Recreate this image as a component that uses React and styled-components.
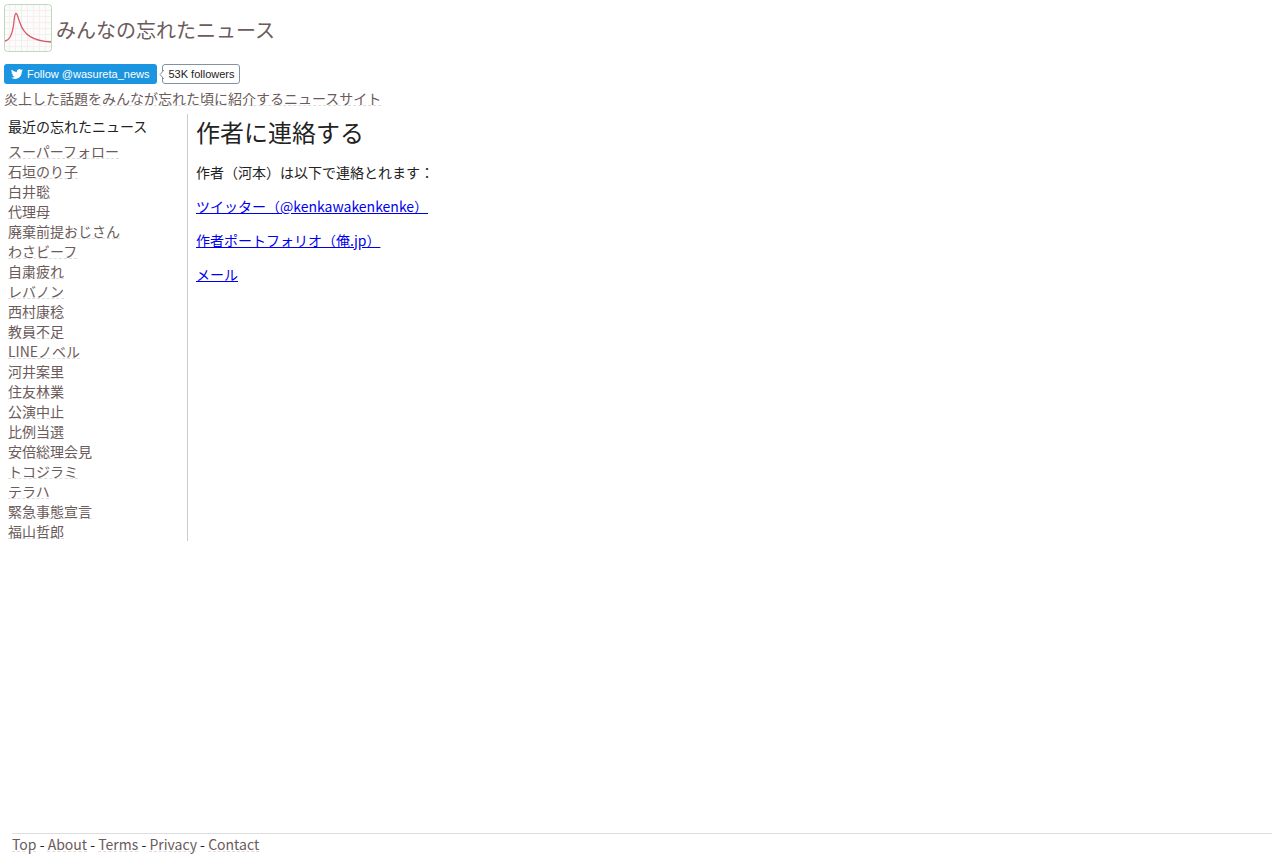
import React from "react";
import styled, { createGlobalStyle } from "styled-components";

const GlobalStyle = createGlobalStyle`
  body {
    margin: 0;
    background: #fff;
    color: #222;
    font-family: "Noto Sans CJK JP", sans-serif;
    font-size: 14px;
    line-height: 20px;
  }
`;

const Page = styled.div`
  display: flex;
  flex-direction: column;
  min-height: 100vh;
`;

const Header = styled.header`
  display: flex;
  flex-direction: column;
  align-items: flex-start;
  padding: 4px 4px 0;
`;

const SubtleLink = styled.a`
  color: #6b5b5b;
  text-decoration: underline dashed #ddd 1px;
`;

const Brand = styled.a`
  display: flex;
  align-items: center;
  gap: 4px;
  color: #6b5b5b;
  font-size: 20px;
  line-height: 28px;
  text-decoration: none;
`;

const SiteName = styled.span`
  padding-top: 4px;
`;

const FollowBar = styled.div`
  display: flex;
  gap: 5px;
  margin: 12px 0 4px;
  font-family: "Liberation Sans", Arial, sans-serif;
  font-size: 11px;
  line-height: 18px;
`;

const FollowLink = styled.a`
  display: flex;
  align-items: center;
  gap: 4px;
  box-sizing: border-box;
  height: 20px;
  padding: 0 8px 0 7px;
  border-radius: 3px;
  background: #1b95e0;
  color: #fff;
  text-decoration: none;
`;

const Followers = styled.a`
  position: relative;
  box-sizing: border-box;
  height: 20px;
  padding: 0 4px 0 5px;
  border: 1px solid #8292a2;
  border-radius: 3px;
  color: #222;
  text-decoration: none;
`;

const Pointer = styled.svg`
  position: absolute;
  left: -4px;
  top: 5px;
`;

const Columns = styled.div`
  display: flex;
  align-items: stretch;
  margin-top: 6px;
`;

const Sidebar = styled.nav`
  box-sizing: border-box;
  width: 188px;
  flex: none;
  padding: 2px 8px 0;
  border-right: 1px solid #ccc;
`;

const SidebarTitle = styled.h2`
  margin: 0 0 5px;
  font-size: 14px;
  font-weight: 400;
  line-height: 20px;
`;

const NewsList = styled.ul`
  margin: 0;
  padding: 0;
  list-style: none;
`;

const Main = styled.main`
  flex: 1;
  padding: 0 8px;
`;

const Title = styled.h1`
  margin: 0 0 12px;
  font-size: 24px;
  font-weight: 400;
  line-height: 36px;
`;

const Paragraph = styled.p`
  margin: 0 0 14px;
`;

const ContactLink = styled.a`
  color: #0000ee;
`;

const Footer = styled.footer`
  margin: auto 12px 0;
  padding-bottom: 4px;
  border-top: 1px solid #ddd;
`;

const news = [
  "スーパーフォロー", "石垣のり子", "白井聡", "代理母", "廃棄前提おじさん",
  "わさビーフ", "自粛疲れ", "レバノン", "西村康稔", "教員不足",
  "LINEノベル", "河井案里", "住友林業", "公演中止", "比例当選",
  "安倍総理会見", "トコジラミ", "テラハ", "緊急事態宣言", "福山哲郎",
];

const contacts = ["ツイッター（@kenkawakenkenke）", "作者ポートフォリオ（俺.jp）", "メール"];

const pages = ["Top", "About", "Terms", "Privacy", "Contact"];

function Logo() {
  return (
    <svg width="48" height="48" viewBox="0 0 48 48" aria-hidden="true">
      <rect x="0.5" y="0.5" width="47" height="47" rx="3" fill="#fcfcfc" stroke="#b9dcbc" />
      <path
        d="M5.5 1v46M11.5 1v46M23.5 1v46M29.5 1v46M35.5 1v46M41.5 1v46M1 6.5h46M1 12.5h46M1 18.5h46M1 24.5h46M1 30.5h46M1 36.5h46M1 42.5h46"
        stroke="#f7eeef"
      />
      <path d="M17.5 1v46" stroke="#e8f0e8" />
      <path
        d="M1 37C7 36 9 28 10 17C10.5 12 11 9.500 12 9.500C13.500 9.500 14 14 16 19C20 31 29 37 47 38"
        fill="none"
        stroke="#d75b66"
        strokeWidth="1.300"
      />
    </svg>
  );
}

function Bird() {
  return (
    <svg width="12" height="12" viewBox="0 0 24 24" fill="#fff" aria-hidden="true">
      <path d="M23.950 4.570a10 10 0 0 1-2.820.770 4.960 4.960 0 0 0 2.160-2.720c-.950.550-2 .950-3.130 1.180a4.920 4.920 0 0 0-8.380 4.480C7.690 8.090 4.070 6.130 1.640 3.160a4.920 4.920 0 0 0 1.520 6.570 4.900 4.900 0 0 1-2.230-.610v.060a4.920 4.920 0 0 0 3.950 4.830 5 5 0 0 1-2.210.080 4.940 4.940 0 0 0 4.600 3.420A9.870 9.870 0 0 1 0 19.540a13.990 13.990 0 0 0 7.550 2.210c9.050 0 14-7.500 14-13.980 0-.210 0-.420-.020-.630a9.940 9.940 0 0 0 2.420-2.570z" />
    </svg>
  );
}

export default function App() {
  return (
    <Page lang="ja">
      <GlobalStyle />
      <Header>
        <Brand href="#top">
          <Logo />
          <SiteName>みんなの忘れたニュース</SiteName>
        </Brand>
        <FollowBar>
          <FollowLink href="#follow">
            <Bird />
            <span>Follow @wasureta_news</span>
          </FollowLink>
          <Followers href="#followers">
            <Pointer width="5" height="9" viewBox="0 0 5 9" aria-hidden="true">
              <path d="M5 0L1 4.500L5 9" fill="#fff" stroke="#8292a2" />
            </Pointer>
            53K followers
          </Followers>
        </FollowBar>
        <SubtleLink href="#about">炎上した話題をみんなが忘れた頃に紹介するニュースサイト</SubtleLink>
      </Header>
      <Columns>
        <Sidebar>
          <SidebarTitle>最近の忘れたニュース</SidebarTitle>
          <NewsList>
            {news.map((name) => (
              <li key={name}>
                <SubtleLink href={`#${name}`}>{name}</SubtleLink>
              </li>
            ))}
          </NewsList>
        </Sidebar>
        <Main>
          <Title>作者に連絡する</Title>
          <Paragraph>作者（河本）は以下で連絡とれます：</Paragraph>
          {contacts.map((label) => (
            <Paragraph key={label}>
              <ContactLink href="#contact">{label}</ContactLink>
            </Paragraph>
          ))}
        </Main>
      </Columns>
      <Footer>
        {pages.map((name, i) => (
          <React.Fragment key={name}>
            {i > 0 && " - "}
            <SubtleLink href={`#${name}`}>{name}</SubtleLink>
          </React.Fragment>
        ))}
      </Footer>
    </Page>
  );
}
